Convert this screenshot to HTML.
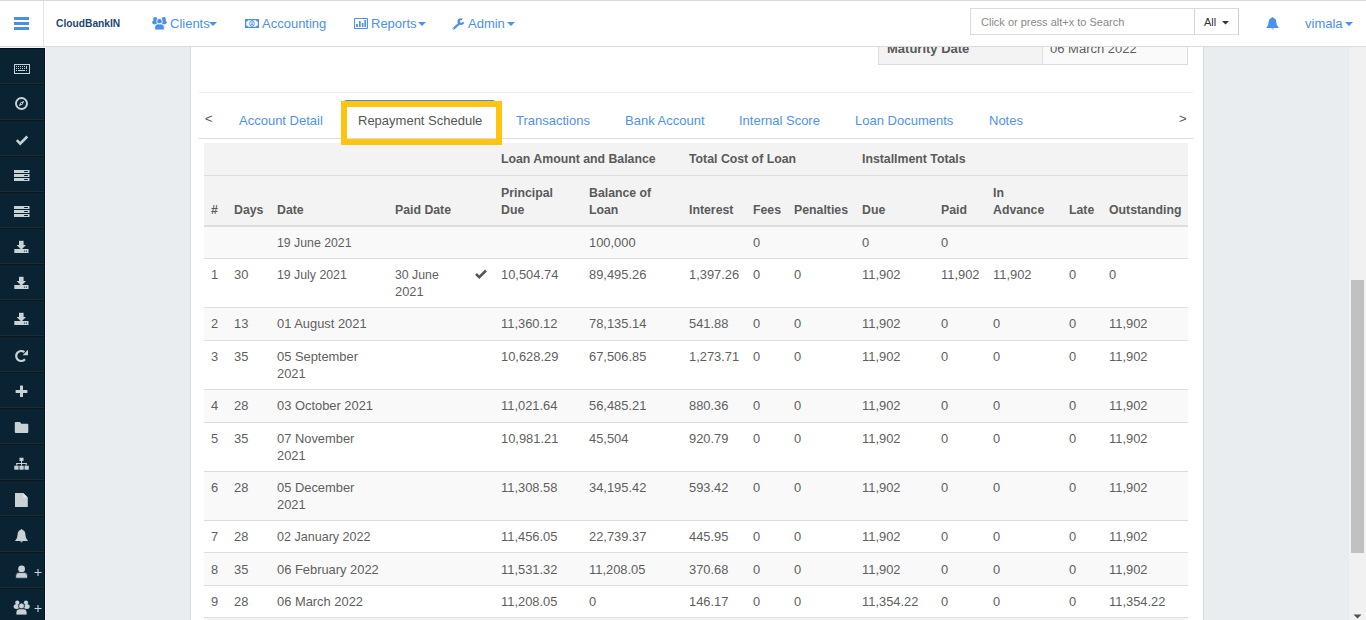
<!DOCTYPE html>
<html><head><meta charset="utf-8"><style>
html,body{margin:0;padding:0;}
body{width:1366px;height:620px;overflow:hidden;position:relative;background:#e9edf0;font-family:"Liberation Sans", sans-serif;}
#hdr{position:absolute;left:0;top:0;width:1366px;height:46px;background:#fff}
.t{position:absolute;white-space:nowrap;line-height:0;height:0}
.t::before{content:"";}
.bl{position:absolute;white-space:nowrap;line-height:17px}
svg{display:block}
</style></head><body>
<div style="position:absolute;left:0;top:48px;width:45px;height:572px;background:#0a2332"></div>
<div style="position:absolute;left:0;top:48px;width:45px;height:1px;background:#03111a"></div>
<div style="position:absolute;left:44px;top:48px;width:1px;height:572px;background:#05141d"></div>
<div style="position:absolute;left:45px;top:47px;width:1px;height:573px;background:#f2f3f4"></div>
<div style="position:absolute;left:0;top:47px;width:45px;height:1px;background:#f4f6f8"></div>
<div style="position:absolute;left:0;top:83px;width:44px;height:1px;background:#1e2c35"></div>
<div style="position:absolute;left:0;top:84px;width:44px;height:1px;background:#0e161b"></div>
<div style="position:absolute;left:0;top:119px;width:44px;height:1px;background:#1e2c35"></div>
<div style="position:absolute;left:0;top:120px;width:44px;height:1px;background:#0e161b"></div>
<div style="position:absolute;left:0;top:155px;width:44px;height:1px;background:#1e2c35"></div>
<div style="position:absolute;left:0;top:156px;width:44px;height:1px;background:#0e161b"></div>
<div style="position:absolute;left:0;top:191px;width:44px;height:1px;background:#1e2c35"></div>
<div style="position:absolute;left:0;top:192px;width:44px;height:1px;background:#0e161b"></div>
<div style="position:absolute;left:0;top:227px;width:44px;height:1px;background:#1e2c35"></div>
<div style="position:absolute;left:0;top:228px;width:44px;height:1px;background:#0e161b"></div>
<div style="position:absolute;left:0;top:263px;width:44px;height:1px;background:#1e2c35"></div>
<div style="position:absolute;left:0;top:264px;width:44px;height:1px;background:#0e161b"></div>
<div style="position:absolute;left:0;top:299px;width:44px;height:1px;background:#1e2c35"></div>
<div style="position:absolute;left:0;top:300px;width:44px;height:1px;background:#0e161b"></div>
<div style="position:absolute;left:0;top:335px;width:44px;height:1px;background:#1e2c35"></div>
<div style="position:absolute;left:0;top:336px;width:44px;height:1px;background:#0e161b"></div>
<div style="position:absolute;left:0;top:371px;width:44px;height:1px;background:#1e2c35"></div>
<div style="position:absolute;left:0;top:372px;width:44px;height:1px;background:#0e161b"></div>
<div style="position:absolute;left:0;top:407px;width:44px;height:1px;background:#1e2c35"></div>
<div style="position:absolute;left:0;top:408px;width:44px;height:1px;background:#0e161b"></div>
<div style="position:absolute;left:0;top:443px;width:44px;height:1px;background:#1e2c35"></div>
<div style="position:absolute;left:0;top:444px;width:44px;height:1px;background:#0e161b"></div>
<div style="position:absolute;left:0;top:479px;width:44px;height:1px;background:#1e2c35"></div>
<div style="position:absolute;left:0;top:480px;width:44px;height:1px;background:#0e161b"></div>
<div style="position:absolute;left:0;top:515px;width:44px;height:1px;background:#1e2c35"></div>
<div style="position:absolute;left:0;top:516px;width:44px;height:1px;background:#0e161b"></div>
<div style="position:absolute;left:0;top:551px;width:44px;height:1px;background:#1e2c35"></div>
<div style="position:absolute;left:0;top:552px;width:44px;height:1px;background:#0e161b"></div>
<div style="position:absolute;left:0;top:587px;width:44px;height:1px;background:#1e2c35"></div>
<div style="position:absolute;left:0;top:588px;width:44px;height:1px;background:#0e161b"></div>
<svg style="position:absolute;left:14px;top:64px" width="16" height="10" viewBox="0 0 16 10"><rect x="0.5" y="0.5" width="15" height="9" fill="none" stroke="#c8d1d4" stroke-width="1"/><g fill="#c8d1d4"><rect x="2" y="2" width="1" height="1"/><rect x="4" y="2" width="1" height="1"/><rect x="6" y="2" width="1" height="1"/><rect x="8" y="2" width="1" height="1"/><rect x="10" y="2" width="1" height="1"/><rect x="12" y="2" width="1" height="1"/><rect x="2" y="4" width="1" height="1"/><rect x="4" y="4" width="1" height="1"/><rect x="6" y="4" width="1" height="1"/><rect x="8" y="4" width="1" height="1"/><rect x="10" y="4" width="1" height="1"/><rect x="12" y="3" width="1" height="2"/><rect x="2" y="6" width="1" height="1"/><rect x="4" y="6" width="7" height="1"/><rect x="12" y="6" width="1" height="1"/></g></svg>
<svg style="position:absolute;left:15px;top:97px" width="13" height="13" viewBox="0 0 13 13"><circle cx="6.5" cy="6.5" r="5.5" fill="none" stroke="#c8d1d4" stroke-width="2"/><path d="M9.3 3.7 L7.6 7.6 L3.7 9.3 L5.4 5.4 Z" fill="#c8d1d4"/><circle cx="6.5" cy="6.5" r="0.7" fill="#0a2332"/></svg>
<svg style="position:absolute;left:15px;top:135px" width="14" height="11" viewBox="0 0 14 11"><path d="M1.8 5.2 L5.2 8.6 L12.3 1.5" fill="none" stroke="#c8d1d4" stroke-width="2.6"/></svg>
<svg style="position:absolute;left:14px;top:170px" width="16" height="11" viewBox="0 0 16 11"><g fill="#c8d1d4"><rect x="0" y="0" width="15.5" height="3"/><rect x="0" y="4" width="15.5" height="3"/><rect x="0" y="8" width="15.5" height="3"/></g><g fill="#0a2332"><rect x="10" y="1" width="4" height="1" rx="0.5"/><rect x="10" y="5" width="4" height="1" rx="0.5"/><rect x="10" y="9" width="4" height="1" rx="0.5"/></g></svg>
<svg style="position:absolute;left:14px;top:206px" width="16" height="11" viewBox="0 0 16 11"><g fill="#c8d1d4"><rect x="0" y="0" width="15.5" height="3"/><rect x="0" y="4" width="15.5" height="3"/><rect x="0" y="8" width="15.5" height="3"/></g><g fill="#0a2332"><rect x="10" y="1" width="4" height="1" rx="0.5"/><rect x="10" y="5" width="4" height="1" rx="0.5"/><rect x="10" y="9" width="4" height="1" rx="0.5"/></g></svg>
<svg style="position:absolute;left:14px;top:240px" width="15" height="14" viewBox="0 0 15 14"><g fill="#c8d1d4"><rect x="5" y="0.8" width="4.6" height="4.6"/><path d="M2.6 5 L12 5 L7.3 9.8 Z"/><rect x="0.3" y="9" width="14.2" height="4"/></g><g fill="#0a2332"><circle cx="10.4" cy="11.1" r="0.6"/><circle cx="12.4" cy="11.1" r="0.6"/></g></svg>
<svg style="position:absolute;left:14px;top:276px" width="15" height="14" viewBox="0 0 15 14"><g fill="#c8d1d4"><rect x="5" y="0.8" width="4.6" height="4.6"/><path d="M2.6 5 L12 5 L7.3 9.8 Z"/><rect x="0.3" y="9" width="14.2" height="4"/></g><g fill="#0a2332"><circle cx="10.4" cy="11.1" r="0.6"/><circle cx="12.4" cy="11.1" r="0.6"/></g></svg>
<svg style="position:absolute;left:14px;top:312px" width="15" height="14" viewBox="0 0 15 14"><g fill="#c8d1d4"><rect x="5" y="0.8" width="4.6" height="4.6"/><path d="M2.6 5 L12 5 L7.3 9.8 Z"/><rect x="0.3" y="9" width="14.2" height="4"/></g><g fill="#0a2332"><circle cx="10.4" cy="11.1" r="0.6"/><circle cx="12.4" cy="11.1" r="0.6"/></g></svg>
<svg style="position:absolute;left:15px;top:349px" width="14" height="14" viewBox="0 0 14 14"><path d="M10.03 10.21 A5 5 0 1 1 9.41 3.17" fill="none" stroke="#c8d1d4" stroke-width="2.2"/><path d="M13 0.8 L13 6.2 L7.6 6.2 Z" fill="#c8d1d4"/></svg>
<svg style="position:absolute;left:15px;top:385px" width="13" height="12" viewBox="0 0 13 12"><rect x="5" y="0.5" width="3" height="11.5" rx="0.6" fill="#c8d1d4"/><rect x="0.6" y="5" width="11.8" height="3" rx="0.6" fill="#c8d1d4"/></svg>
<svg style="position:absolute;left:14px;top:421px" width="15" height="13" viewBox="0 0 15 13"><path d="M0.8 2 Q0.8 1 1.8 1 L5.5 1 Q6.3 1 6.8 2 L7.2 2.8 L13.3 2.8 Q14.3 2.8 14.3 3.8 L14.3 11 Q14.3 12 13.3 12 L1.8 12 Q0.8 12 0.8 11 Z" fill="#c8d1d4"/></svg>
<svg style="position:absolute;left:14px;top:457px" width="16" height="13" viewBox="0 0 16 13"><g fill="#c8d1d4"><rect x="5.5" y="0.7" width="4" height="3.3"/><rect x="7" y="4" width="1" height="2"/><rect x="2.3" y="6" width="10.4" height="1"/><rect x="2.3" y="6" width="1" height="2.5"/><rect x="11.7" y="6" width="1" height="2.5"/><rect x="7" y="6" width="1" height="2.5"/><rect x="0.3" y="8.7" width="4.3" height="4"/><rect x="5.4" y="8.7" width="4.3" height="4"/><rect x="10.5" y="8.7" width="4.3" height="4"/></g></svg>
<svg style="position:absolute;left:15px;top:493px" width="13" height="14" viewBox="0 0 13 14"><path d="M0 0 L8.3 0 L12.8 4.5 L12.8 14 L0 14 Z" fill="#c8d1d4"/><path d="M8.3 0.3 L8.3 4.5 L12.5 4.5 Z" fill="#e6ecee"/></svg>
<svg style="position:absolute;left:15px;top:529px" width="13" height="14" viewBox="0 0 13 14"><path d="M6.5 0 Q7.4 0 7.4 1 Q10.4 1.8 10.4 5.6 Q10.4 9.6 12.8 11.4 L12.8 12 L0.2 12 L0.2 11.4 Q2.6 9.6 2.6 5.6 Q2.6 1.8 5.6 1 Q5.6 0 6.5 0 Z" fill="#c8d1d4"/><path d="M5 12.3 Q6.5 14.6 8 12.3 Z" fill="#c8d1d4"/></svg>
<svg style="position:absolute;left:15px;top:565px" width="28" height="14" viewBox="0 0 28 14"><circle cx="6.6" cy="4" r="3.4" fill="#c8d1d4"/><path d="M0.7 13.2 L0.7 11 Q0.7 7.6 3.7 7.6 L9.5 7.6 Q12.5 7.6 12.5 11 L12.5 13.2 Z" fill="#c8d1d4" stroke="#0a2332" stroke-width="0.7"/><path d="M23 4 V11 M19.5 7.5 H26.5" stroke="#c8d1d4" stroke-width="1.1"/></svg>
<svg style="position:absolute;left:13px;top:600px" width="30" height="16" viewBox="0 0 30 16"><g fill="#c8d1d4"><circle cx="4.3" cy="2.6" r="2.1"/><circle cx="13" cy="2.6" r="2.1"/><ellipse cx="3.6" cy="6.5" rx="3" ry="2.5"/><ellipse cx="13.7" cy="6.5" rx="3" ry="2.5"/><circle cx="8.5" cy="6" r="3" stroke="#0a2332" stroke-width="0.8"/><path d="M3 15 L3 12.3 Q3 8.8 6.3 8.8 L10.7 8.8 Q14 8.8 14 12.3 L14 15 Z" stroke="#0a2332" stroke-width="0.8"/></g><path d="M25 5 V12 M21.5 8.5 H28.5" stroke="#c8d1d4" stroke-width="1.1"/></svg>
<div style="position:absolute;left:190px;top:47px;width:1px;height:573px;background:#d8dcdf"></div>
<div style="position:absolute;left:191px;top:47px;width:1012px;height:573px;background:#fff"></div>
<div style="position:absolute;left:1203px;top:47px;width:1px;height:573px;background:#d5dadc"></div>
<div style="position:absolute;left:878px;top:30px;width:165px;height:35px;background:#f3f3f3;border:1px solid #ddd;border-top:none;box-sizing:border-box"></div>
<div style="position:absolute;left:1043px;top:30px;width:145px;height:35px;background:#fafafa;border:1px solid #ddd;border-left:none;border-top:none;box-sizing:border-box"></div>
<div class="bl" style="left:887px;top:40px;font-size:13px;font-weight:bold;color:#5a5a5a">Maturity Date</div>
<div class="bl" style="left:1050px;top:40px;font-size:13px;color:#5f5f5f">06 March 2022</div>
<div style="position:absolute;left:199px;top:92px;width:994px;height:1px;background:#eee"></div>
<div style="position:absolute;left:199px;top:138px;width:994px;height:1px;background:#ddd"></div>
<div class="bl" style="left:205px;top:110px;font-size:13px;color:#555">&lt;</div>
<div class="bl" style="left:239px;top:112px;font-size:13px;color:#5092ea">Account Detail</div>
<div class="bl" style="left:358px;top:112px;font-size:13px;color:#555">Repayment Schedule</div>
<div class="bl" style="left:516px;top:112px;font-size:13px;color:#5092ea">Transactions</div>
<div class="bl" style="left:625px;top:112px;font-size:13px;color:#5092ea">Bank Account</div>
<div class="bl" style="left:739px;top:112px;font-size:13px;color:#5092ea">Internal Score</div>
<div class="bl" style="left:855px;top:112px;font-size:13px;color:#5092ea">Loan Documents</div>
<div class="bl" style="left:989px;top:112px;font-size:13px;color:#5092ea">Notes</div>
<div class="bl" style="left:1179px;top:110px;font-size:13px;color:#555">&gt;</div>
<div style="position:absolute;left:344px;top:100px;width:151px;height:2px;background:#4a8ee2;border-radius:2px 2px 0 0"></div>
<div style="position:absolute;left:204px;top:143px;width:984px;height:83px;background:#f3f3f3"></div>
<div style="position:absolute;left:204px;top:175px;width:984px;height:1px;background:#ddd"></div>
<div style="position:absolute;left:204px;top:225px;width:984px;height:2px;background:#ddd"></div>
<div class="t" style="left:501px;top:158.74px;font-size:12.3px;color:#5a5a5a;font-weight:bold;">Loan Amount and Balance</div>
<div class="t" style="left:689px;top:158.74px;font-size:12.3px;color:#5a5a5a;font-weight:bold;">Total Cost of Loan</div>
<div class="t" style="left:862px;top:158.74px;font-size:12.3px;color:#5a5a5a;font-weight:bold;">Installment Totals</div>
<div class="t" style="left:211px;top:209.74px;font-size:12.3px;color:#5a5a5a;font-weight:bold;">#</div>
<div class="t" style="left:234px;top:209.74px;font-size:12.3px;color:#5a5a5a;font-weight:bold;">Days</div>
<div class="t" style="left:277px;top:209.74px;font-size:12.3px;color:#5a5a5a;font-weight:bold;">Date</div>
<div class="t" style="left:395px;top:209.74px;font-size:12.3px;color:#5a5a5a;font-weight:bold;">Paid Date</div>
<div class="t" style="left:501px;top:192.74px;font-size:12.3px;color:#5a5a5a;font-weight:bold;">Principal</div>
<div class="t" style="left:501px;top:209.74px;font-size:12.3px;color:#5a5a5a;font-weight:bold;">Due</div>
<div class="t" style="left:589px;top:192.74px;font-size:12.3px;color:#5a5a5a;font-weight:bold;">Balance of</div>
<div class="t" style="left:589px;top:209.74px;font-size:12.3px;color:#5a5a5a;font-weight:bold;">Loan</div>
<div class="t" style="left:689px;top:209.74px;font-size:12.3px;color:#5a5a5a;font-weight:bold;">Interest</div>
<div class="t" style="left:753px;top:209.74px;font-size:12.3px;color:#5a5a5a;font-weight:bold;">Fees</div>
<div class="t" style="left:794px;top:209.74px;font-size:12.3px;color:#5a5a5a;font-weight:bold;">Penalties</div>
<div class="t" style="left:862px;top:209.74px;font-size:12.3px;color:#5a5a5a;font-weight:bold;">Due</div>
<div class="t" style="left:941px;top:209.74px;font-size:12.3px;color:#5a5a5a;font-weight:bold;">Paid</div>
<div class="t" style="left:993px;top:192.74px;font-size:12.3px;color:#5a5a5a;font-weight:bold;">In</div>
<div class="t" style="left:993px;top:209.74px;font-size:12.3px;color:#5a5a5a;font-weight:bold;">Advance</div>
<div class="t" style="left:1069px;top:209.74px;font-size:12.3px;color:#5a5a5a;font-weight:bold;">Late</div>
<div class="t" style="left:1109px;top:209.74px;font-size:12.3px;color:#5a5a5a;font-weight:bold;">Outstanding</div>
<div style="position:absolute;left:204px;top:227px;width:984px;height:31px;background:#f9f9f9"></div>
<div style="position:absolute;left:204px;top:258px;width:984px;height:49px;background:#fff"></div>
<div style="position:absolute;left:204px;top:307px;width:984px;height:33px;background:#f9f9f9"></div>
<div style="position:absolute;left:204px;top:340px;width:984px;height:49px;background:#fff"></div>
<div style="position:absolute;left:204px;top:389px;width:984px;height:33px;background:#f9f9f9"></div>
<div style="position:absolute;left:204px;top:422px;width:984px;height:49px;background:#fff"></div>
<div style="position:absolute;left:204px;top:471px;width:984px;height:49px;background:#f9f9f9"></div>
<div style="position:absolute;left:204px;top:520px;width:984px;height:32px;background:#fff"></div>
<div style="position:absolute;left:204px;top:552px;width:984px;height:33px;background:#f9f9f9"></div>
<div style="position:absolute;left:204px;top:585px;width:984px;height:32px;background:#fff"></div>
<div style="position:absolute;left:204px;top:618px;width:984px;height:2px;background:#f6f6f6"></div>
<div style="position:absolute;left:204px;top:258px;width:984px;height:1px;background:#ddd"></div>
<div style="position:absolute;left:204px;top:307px;width:984px;height:1px;background:#ddd"></div>
<div style="position:absolute;left:204px;top:340px;width:984px;height:1px;background:#ddd"></div>
<div style="position:absolute;left:204px;top:389px;width:984px;height:1px;background:#ddd"></div>
<div style="position:absolute;left:204px;top:422px;width:984px;height:1px;background:#ddd"></div>
<div style="position:absolute;left:204px;top:471px;width:984px;height:1px;background:#ddd"></div>
<div style="position:absolute;left:204px;top:520px;width:984px;height:1px;background:#ddd"></div>
<div style="position:absolute;left:204px;top:552px;width:984px;height:1px;background:#ddd"></div>
<div style="position:absolute;left:204px;top:585px;width:984px;height:1px;background:#ddd"></div>
<div style="position:absolute;left:204px;top:617px;width:984px;height:1px;background:#ddd"></div>
<div class="t" style="left:277px;top:242.74px;font-size:12.3px;color:#5f5f5f;font-weight:normal;">19 June 2021</div>
<div class="t" style="left:589px;top:242.53px;font-size:12.9px;color:#5f5f5f;font-weight:normal;">100,000</div>
<div class="t" style="left:753px;top:242.53px;font-size:12.9px;color:#5f5f5f;font-weight:normal;">0</div>
<div class="t" style="left:862px;top:242.53px;font-size:12.9px;color:#5f5f5f;font-weight:normal;">0</div>
<div class="t" style="left:941px;top:242.53px;font-size:12.9px;color:#5f5f5f;font-weight:normal;">0</div>
<div class="t" style="left:211px;top:274.53px;font-size:12.9px;color:#5f5f5f;font-weight:normal;">1</div>
<div class="t" style="left:234px;top:274.53px;font-size:12.9px;color:#5f5f5f;font-weight:normal;">30</div>
<div class="t" style="left:277px;top:274.74px;font-size:12.3px;color:#5f5f5f;font-weight:normal;">19 July 2021</div>
<div class="t" style="left:395px;top:274.74px;font-size:12.3px;color:#5f5f5f;font-weight:normal;">30 June</div>
<div class="t" style="left:395px;top:291.53px;font-size:12.9px;color:#5f5f5f;font-weight:normal;">2021</div>
<div class="t" style="left:501px;top:274.53px;font-size:12.9px;color:#5f5f5f;font-weight:normal;">10,504.74</div>
<div class="t" style="left:589px;top:274.53px;font-size:12.9px;color:#5f5f5f;font-weight:normal;">89,495.26</div>
<div class="t" style="left:689px;top:274.53px;font-size:12.9px;color:#5f5f5f;font-weight:normal;">1,397.26</div>
<div class="t" style="left:753px;top:274.53px;font-size:12.9px;color:#5f5f5f;font-weight:normal;">0</div>
<div class="t" style="left:794px;top:274.53px;font-size:12.9px;color:#5f5f5f;font-weight:normal;">0</div>
<div class="t" style="left:862px;top:274.53px;font-size:12.9px;color:#5f5f5f;font-weight:normal;">11,902</div>
<div class="t" style="left:941px;top:274.53px;font-size:12.9px;color:#5f5f5f;font-weight:normal;">11,902</div>
<div class="t" style="left:993px;top:274.53px;font-size:12.9px;color:#5f5f5f;font-weight:normal;">11,902</div>
<div class="t" style="left:1069px;top:274.53px;font-size:12.9px;color:#5f5f5f;font-weight:normal;">0</div>
<div class="t" style="left:1109px;top:274.53px;font-size:12.9px;color:#5f5f5f;font-weight:normal;">0</div>
<div class="t" style="left:211px;top:323.53px;font-size:12.9px;color:#5f5f5f;font-weight:normal;">2</div>
<div class="t" style="left:234px;top:323.53px;font-size:12.9px;color:#5f5f5f;font-weight:normal;">13</div>
<div class="t" style="left:277px;top:323.53px;font-size:12.9px;color:#5f5f5f;font-weight:normal;">01 August 2021</div>
<div class="t" style="left:501px;top:323.53px;font-size:12.9px;color:#5f5f5f;font-weight:normal;">11,360.12</div>
<div class="t" style="left:589px;top:323.53px;font-size:12.9px;color:#5f5f5f;font-weight:normal;">78,135.14</div>
<div class="t" style="left:689px;top:323.53px;font-size:12.9px;color:#5f5f5f;font-weight:normal;">541.88</div>
<div class="t" style="left:753px;top:323.53px;font-size:12.9px;color:#5f5f5f;font-weight:normal;">0</div>
<div class="t" style="left:794px;top:323.53px;font-size:12.9px;color:#5f5f5f;font-weight:normal;">0</div>
<div class="t" style="left:862px;top:323.53px;font-size:12.9px;color:#5f5f5f;font-weight:normal;">11,902</div>
<div class="t" style="left:941px;top:323.53px;font-size:12.9px;color:#5f5f5f;font-weight:normal;">0</div>
<div class="t" style="left:993px;top:323.53px;font-size:12.9px;color:#5f5f5f;font-weight:normal;">0</div>
<div class="t" style="left:1069px;top:323.53px;font-size:12.9px;color:#5f5f5f;font-weight:normal;">0</div>
<div class="t" style="left:1109px;top:323.53px;font-size:12.9px;color:#5f5f5f;font-weight:normal;">11,902</div>
<div class="t" style="left:211px;top:356.53px;font-size:12.9px;color:#5f5f5f;font-weight:normal;">3</div>
<div class="t" style="left:234px;top:356.53px;font-size:12.9px;color:#5f5f5f;font-weight:normal;">35</div>
<div class="t" style="left:277px;top:356.53px;font-size:12.9px;color:#5f5f5f;font-weight:normal;">05 September</div>
<div class="t" style="left:277px;top:373.53px;font-size:12.9px;color:#5f5f5f;font-weight:normal;">2021</div>
<div class="t" style="left:501px;top:356.53px;font-size:12.9px;color:#5f5f5f;font-weight:normal;">10,628.29</div>
<div class="t" style="left:589px;top:356.53px;font-size:12.9px;color:#5f5f5f;font-weight:normal;">67,506.85</div>
<div class="t" style="left:689px;top:356.53px;font-size:12.9px;color:#5f5f5f;font-weight:normal;">1,273.71</div>
<div class="t" style="left:753px;top:356.53px;font-size:12.9px;color:#5f5f5f;font-weight:normal;">0</div>
<div class="t" style="left:794px;top:356.53px;font-size:12.9px;color:#5f5f5f;font-weight:normal;">0</div>
<div class="t" style="left:862px;top:356.53px;font-size:12.9px;color:#5f5f5f;font-weight:normal;">11,902</div>
<div class="t" style="left:941px;top:356.53px;font-size:12.9px;color:#5f5f5f;font-weight:normal;">0</div>
<div class="t" style="left:993px;top:356.53px;font-size:12.9px;color:#5f5f5f;font-weight:normal;">0</div>
<div class="t" style="left:1069px;top:356.53px;font-size:12.9px;color:#5f5f5f;font-weight:normal;">0</div>
<div class="t" style="left:1109px;top:356.53px;font-size:12.9px;color:#5f5f5f;font-weight:normal;">11,902</div>
<div class="t" style="left:211px;top:405.53px;font-size:12.9px;color:#5f5f5f;font-weight:normal;">4</div>
<div class="t" style="left:234px;top:405.53px;font-size:12.9px;color:#5f5f5f;font-weight:normal;">28</div>
<div class="t" style="left:277px;top:405.53px;font-size:12.9px;color:#5f5f5f;font-weight:normal;">03 October 2021</div>
<div class="t" style="left:501px;top:405.53px;font-size:12.9px;color:#5f5f5f;font-weight:normal;">11,021.64</div>
<div class="t" style="left:589px;top:405.53px;font-size:12.9px;color:#5f5f5f;font-weight:normal;">56,485.21</div>
<div class="t" style="left:689px;top:405.53px;font-size:12.9px;color:#5f5f5f;font-weight:normal;">880.36</div>
<div class="t" style="left:753px;top:405.53px;font-size:12.9px;color:#5f5f5f;font-weight:normal;">0</div>
<div class="t" style="left:794px;top:405.53px;font-size:12.9px;color:#5f5f5f;font-weight:normal;">0</div>
<div class="t" style="left:862px;top:405.53px;font-size:12.9px;color:#5f5f5f;font-weight:normal;">11,902</div>
<div class="t" style="left:941px;top:405.53px;font-size:12.9px;color:#5f5f5f;font-weight:normal;">0</div>
<div class="t" style="left:993px;top:405.53px;font-size:12.9px;color:#5f5f5f;font-weight:normal;">0</div>
<div class="t" style="left:1069px;top:405.53px;font-size:12.9px;color:#5f5f5f;font-weight:normal;">0</div>
<div class="t" style="left:1109px;top:405.53px;font-size:12.9px;color:#5f5f5f;font-weight:normal;">11,902</div>
<div class="t" style="left:211px;top:438.53px;font-size:12.9px;color:#5f5f5f;font-weight:normal;">5</div>
<div class="t" style="left:234px;top:438.53px;font-size:12.9px;color:#5f5f5f;font-weight:normal;">35</div>
<div class="t" style="left:277px;top:438.53px;font-size:12.9px;color:#5f5f5f;font-weight:normal;">07 November</div>
<div class="t" style="left:277px;top:455.53px;font-size:12.9px;color:#5f5f5f;font-weight:normal;">2021</div>
<div class="t" style="left:501px;top:438.53px;font-size:12.9px;color:#5f5f5f;font-weight:normal;">10,981.21</div>
<div class="t" style="left:589px;top:438.53px;font-size:12.9px;color:#5f5f5f;font-weight:normal;">45,504</div>
<div class="t" style="left:689px;top:438.53px;font-size:12.9px;color:#5f5f5f;font-weight:normal;">920.79</div>
<div class="t" style="left:753px;top:438.53px;font-size:12.9px;color:#5f5f5f;font-weight:normal;">0</div>
<div class="t" style="left:794px;top:438.53px;font-size:12.9px;color:#5f5f5f;font-weight:normal;">0</div>
<div class="t" style="left:862px;top:438.53px;font-size:12.9px;color:#5f5f5f;font-weight:normal;">11,902</div>
<div class="t" style="left:941px;top:438.53px;font-size:12.9px;color:#5f5f5f;font-weight:normal;">0</div>
<div class="t" style="left:993px;top:438.53px;font-size:12.9px;color:#5f5f5f;font-weight:normal;">0</div>
<div class="t" style="left:1069px;top:438.53px;font-size:12.9px;color:#5f5f5f;font-weight:normal;">0</div>
<div class="t" style="left:1109px;top:438.53px;font-size:12.9px;color:#5f5f5f;font-weight:normal;">11,902</div>
<div class="t" style="left:211px;top:487.53px;font-size:12.9px;color:#5f5f5f;font-weight:normal;">6</div>
<div class="t" style="left:234px;top:487.53px;font-size:12.9px;color:#5f5f5f;font-weight:normal;">28</div>
<div class="t" style="left:277px;top:487.53px;font-size:12.9px;color:#5f5f5f;font-weight:normal;">05 December</div>
<div class="t" style="left:277px;top:504.53px;font-size:12.9px;color:#5f5f5f;font-weight:normal;">2021</div>
<div class="t" style="left:501px;top:487.53px;font-size:12.9px;color:#5f5f5f;font-weight:normal;">11,308.58</div>
<div class="t" style="left:589px;top:487.53px;font-size:12.9px;color:#5f5f5f;font-weight:normal;">34,195.42</div>
<div class="t" style="left:689px;top:487.53px;font-size:12.9px;color:#5f5f5f;font-weight:normal;">593.42</div>
<div class="t" style="left:753px;top:487.53px;font-size:12.9px;color:#5f5f5f;font-weight:normal;">0</div>
<div class="t" style="left:794px;top:487.53px;font-size:12.9px;color:#5f5f5f;font-weight:normal;">0</div>
<div class="t" style="left:862px;top:487.53px;font-size:12.9px;color:#5f5f5f;font-weight:normal;">11,902</div>
<div class="t" style="left:941px;top:487.53px;font-size:12.9px;color:#5f5f5f;font-weight:normal;">0</div>
<div class="t" style="left:993px;top:487.53px;font-size:12.9px;color:#5f5f5f;font-weight:normal;">0</div>
<div class="t" style="left:1069px;top:487.53px;font-size:12.9px;color:#5f5f5f;font-weight:normal;">0</div>
<div class="t" style="left:1109px;top:487.53px;font-size:12.9px;color:#5f5f5f;font-weight:normal;">11,902</div>
<div class="t" style="left:211px;top:536.53px;font-size:12.9px;color:#5f5f5f;font-weight:normal;">7</div>
<div class="t" style="left:234px;top:536.53px;font-size:12.9px;color:#5f5f5f;font-weight:normal;">28</div>
<div class="t" style="left:277px;top:536.65px;font-size:12.55px;color:#5f5f5f;font-weight:normal;">02 January 2022</div>
<div class="t" style="left:501px;top:536.53px;font-size:12.9px;color:#5f5f5f;font-weight:normal;">11,456.05</div>
<div class="t" style="left:589px;top:536.53px;font-size:12.9px;color:#5f5f5f;font-weight:normal;">22,739.37</div>
<div class="t" style="left:689px;top:536.53px;font-size:12.9px;color:#5f5f5f;font-weight:normal;">445.95</div>
<div class="t" style="left:753px;top:536.53px;font-size:12.9px;color:#5f5f5f;font-weight:normal;">0</div>
<div class="t" style="left:794px;top:536.53px;font-size:12.9px;color:#5f5f5f;font-weight:normal;">0</div>
<div class="t" style="left:862px;top:536.53px;font-size:12.9px;color:#5f5f5f;font-weight:normal;">11,902</div>
<div class="t" style="left:941px;top:536.53px;font-size:12.9px;color:#5f5f5f;font-weight:normal;">0</div>
<div class="t" style="left:993px;top:536.53px;font-size:12.9px;color:#5f5f5f;font-weight:normal;">0</div>
<div class="t" style="left:1069px;top:536.53px;font-size:12.9px;color:#5f5f5f;font-weight:normal;">0</div>
<div class="t" style="left:1109px;top:536.53px;font-size:12.9px;color:#5f5f5f;font-weight:normal;">11,902</div>
<div class="t" style="left:211px;top:569.53px;font-size:12.9px;color:#5f5f5f;font-weight:normal;">8</div>
<div class="t" style="left:234px;top:569.53px;font-size:12.9px;color:#5f5f5f;font-weight:normal;">35</div>
<div class="t" style="left:277px;top:569.53px;font-size:12.9px;color:#5f5f5f;font-weight:normal;">06 February 2022</div>
<div class="t" style="left:501px;top:569.53px;font-size:12.9px;color:#5f5f5f;font-weight:normal;">11,531.32</div>
<div class="t" style="left:589px;top:569.53px;font-size:12.9px;color:#5f5f5f;font-weight:normal;">11,208.05</div>
<div class="t" style="left:689px;top:569.53px;font-size:12.9px;color:#5f5f5f;font-weight:normal;">370.68</div>
<div class="t" style="left:753px;top:569.53px;font-size:12.9px;color:#5f5f5f;font-weight:normal;">0</div>
<div class="t" style="left:794px;top:569.53px;font-size:12.9px;color:#5f5f5f;font-weight:normal;">0</div>
<div class="t" style="left:862px;top:569.53px;font-size:12.9px;color:#5f5f5f;font-weight:normal;">11,902</div>
<div class="t" style="left:941px;top:569.53px;font-size:12.9px;color:#5f5f5f;font-weight:normal;">0</div>
<div class="t" style="left:993px;top:569.53px;font-size:12.9px;color:#5f5f5f;font-weight:normal;">0</div>
<div class="t" style="left:1069px;top:569.53px;font-size:12.9px;color:#5f5f5f;font-weight:normal;">0</div>
<div class="t" style="left:1109px;top:569.53px;font-size:12.9px;color:#5f5f5f;font-weight:normal;">11,902</div>
<div class="t" style="left:211px;top:601.53px;font-size:12.9px;color:#5f5f5f;font-weight:normal;">9</div>
<div class="t" style="left:234px;top:601.53px;font-size:12.9px;color:#5f5f5f;font-weight:normal;">28</div>
<div class="t" style="left:277px;top:601.53px;font-size:12.9px;color:#5f5f5f;font-weight:normal;">06 March 2022</div>
<div class="t" style="left:501px;top:601.53px;font-size:12.9px;color:#5f5f5f;font-weight:normal;">11,208.05</div>
<div class="t" style="left:589px;top:601.53px;font-size:12.9px;color:#5f5f5f;font-weight:normal;">0</div>
<div class="t" style="left:689px;top:601.53px;font-size:12.9px;color:#5f5f5f;font-weight:normal;">146.17</div>
<div class="t" style="left:753px;top:601.53px;font-size:12.9px;color:#5f5f5f;font-weight:normal;">0</div>
<div class="t" style="left:794px;top:601.53px;font-size:12.9px;color:#5f5f5f;font-weight:normal;">0</div>
<div class="t" style="left:862px;top:601.53px;font-size:12.9px;color:#5f5f5f;font-weight:normal;">11,354.22</div>
<div class="t" style="left:941px;top:601.53px;font-size:12.9px;color:#5f5f5f;font-weight:normal;">0</div>
<div class="t" style="left:993px;top:601.53px;font-size:12.9px;color:#5f5f5f;font-weight:normal;">0</div>
<div class="t" style="left:1069px;top:601.53px;font-size:12.9px;color:#5f5f5f;font-weight:normal;">0</div>
<div class="t" style="left:1109px;top:601.53px;font-size:12.9px;color:#5f5f5f;font-weight:normal;">11,354.22</div>
<svg style="position:absolute;left:475px;top:269px" width="12" height="10" viewBox="0 0 12 10"><path d="M1 5 L4.3 8.2 L11 1.5" fill="none" stroke="#555" stroke-width="2.5"/></svg>
<div style="position:absolute;left:341px;top:101px;width:161px;height:44px;border:6px solid #fdc510;box-sizing:border-box"></div>
<div style="position:absolute;left:1349px;top:47px;width:17px;height:573px;background:#f1f1f1"></div>
<div style="position:absolute;left:1351px;top:280px;width:13px;height:273px;background:#c1c1c1"></div>
<svg style="position:absolute;left:1353px;top:614px" width="9" height="5" viewBox="0 0 9 5"><path d="M0.5 0.5 H8.5 L4.5 4.5 Z" fill="#505050"/></svg>
<div id="hdr"></div>
<div style="position:absolute;left:0;top:0;width:1366px;height:1px;background:#d8d9dc"></div>
<div style="position:absolute;left:43px;top:1px;width:1px;height:45px;background:#e3e3e3"></div>
<div style="position:absolute;left:0;top:46px;width:1366px;height:1px;background:#dcdcdc"></div>
<div style="position:absolute;left:14px;top:17px;width:15px;height:3px;background:#4a8fe7"></div>
<div style="position:absolute;left:14px;top:22px;width:15px;height:3px;background:#4a8fe7"></div>
<div style="position:absolute;left:14px;top:27px;width:15px;height:3px;background:#4a8fe7"></div>
<div class="bl" style="left:56px;top:15px;font-size:11.5px;font-weight:bold;color:#1e4670;transform:scaleX(0.89);transform-origin:0 0">CloudBankIN</div>
<div class="bl" style="left:170px;top:15px;font-size:13px;color:#4b90ea">Clients</div>
<div class="bl" style="left:262px;top:15px;font-size:13px;color:#4b90ea">Accounting</div>
<div class="bl" style="left:371px;top:15px;font-size:13px;color:#4b90ea">Reports</div>
<div class="bl" style="left:468px;top:15px;font-size:13px;color:#4b90ea">Admin</div>
<svg style="position:absolute;left:209px;top:22px" width="8" height="4" viewBox="0 0 8 4"><path d="M0 0 H8 L4.0 4 Z" fill="#4b90ea"/></svg>
<svg style="position:absolute;left:418px;top:22px" width="8" height="4" viewBox="0 0 8 4"><path d="M0 0 H8 L4.0 4 Z" fill="#4b90ea"/></svg>
<svg style="position:absolute;left:507px;top:22px" width="8" height="4" viewBox="0 0 8 4"><path d="M0 0 H8 L4.0 4 Z" fill="#4b90ea"/></svg>
<svg style="position:absolute;left:152px;top:17px" width="15" height="13" viewBox="0 0 15 13"><g fill="#4b90ea">
<circle cx="3.2" cy="2.2" r="2.1"/><ellipse cx="2.9" cy="5.3" rx="2.7" ry="2.1"/>
<circle cx="11.8" cy="2.2" r="2.1"/><ellipse cx="12.1" cy="5.3" rx="2.7" ry="2.1"/>
<circle cx="7.5" cy="4.3" r="2.8" stroke="#fff" stroke-width="0.9"/>
<path d="M2.7 13 L2.7 9.9 Q2.7 6.9 5.7 6.9 L9.3 6.9 Q12.3 6.9 12.3 9.9 L12.3 13 Z" stroke="#fff" stroke-width="0.9"/></g></svg>
<svg style="position:absolute;left:245px;top:19px" width="14" height="9" viewBox="0 0 14 9"><rect x="0" y="0" width="14" height="9" fill="#4b90ea"/>
<path d="M3 1.2 H11 Q11 2.5 12.7 2.5 V6.5 Q11 6.5 11 7.8 H3 Q3 6.5 1.3 6.5 V2.5 Q3 2.5 3 1.2 Z" fill="#fff"/>
<ellipse cx="7" cy="4.5" rx="2.3" ry="2.9" fill="none" stroke="#4b90ea" stroke-width="1"/><rect x="6.6" y="2.6" width="1" height="3.2" fill="#4b90ea"/><rect x="6" y="5.3" width="2.2" height="0.8" fill="#4b90ea"/></svg>
<svg style="position:absolute;left:354px;top:18px" width="14" height="11" viewBox="0 0 14 11"><rect x="0.5" y="0.5" width="13" height="10" rx="0.8" fill="none" stroke="#4b90ea" stroke-width="1.1"/>
<rect x="2.2" y="6" width="1.7" height="3" fill="#4b90ea"/><rect x="5" y="3" width="1.7" height="6" fill="#4b90ea"/><rect x="7.8" y="5" width="1.7" height="4" fill="#4b90ea"/><rect x="10.4" y="2" width="1.7" height="7" fill="#4b90ea"/></svg>
<svg style="position:absolute;left:452px;top:18px" width="13" height="12" viewBox="0 0 13 12"><g fill="#4b90ea"><path d="M1.2 11.6 Q0.2 11.2 0.4 10.2 L6.2 5 L7.8 6.6 L2.4 11.6 Q1.8 12 1.2 11.6 Z"/><circle cx="8.9" cy="3.6" r="3.4"/></g>
<path d="M9.2 3.3 L11.2 0 H13.5 V3.8 L11.5 4.2 Z" fill="#fff"/><circle cx="9.3" cy="3.4" r="1.3" fill="#fff"/><circle cx="1.6" cy="10.5" r="0.5" fill="#fff"/></svg>
<div style="position:absolute;left:970px;top:8px;width:269px;height:27px;border:1px solid #dcdcdc;box-sizing:border-box;background:#fff"></div>
<div style="position:absolute;left:1194px;top:8px;width:1px;height:27px;background:#d6d6d6"></div>
<div style="position:absolute;left:1238px;top:8px;width:1px;height:27px;background:#cfcfcf"></div>
<div class="bl" style="left:981px;top:14px;font-size:11px;color:#8a8a8a">Click or press alt+x to Search</div>
<div class="bl" style="left:1204px;top:14px;font-size:11px;color:#333">All</div>
<svg style="position:absolute;left:1222px;top:21px" width="7" height="3.5" viewBox="0 0 7 3.5"><path d="M0 0 H7 L3.5 3.5 Z" fill="#333"/></svg>
<svg style="position:absolute;left:1266px;top:17px" width="13" height="13" viewBox="0 0 13 13"><path d="M6.5 0 Q7.4 0 7.4 1 Q10.4 1.8 10.4 5.6 Q10.4 9 12.6 10.6 L12.6 11 L0.4 11 L0.4 10.6 Q2.6 9 2.6 5.6 Q2.6 1.8 5.6 1 Q5.6 0 6.5 0 Z" fill="#4b90ea"/><path d="M5 11.4 Q6.5 13.4 8 11.4 Z" fill="#4b90ea"/></svg>
<div class="bl" style="left:1305px;top:15px;font-size:13px;color:#4b90ea">vimala</div>
<svg style="position:absolute;left:1345px;top:22px" width="8" height="4" viewBox="0 0 8 4"><path d="M0 0 H8 L4.0 4 Z" fill="#4b90ea"/></svg>
</body></html>
